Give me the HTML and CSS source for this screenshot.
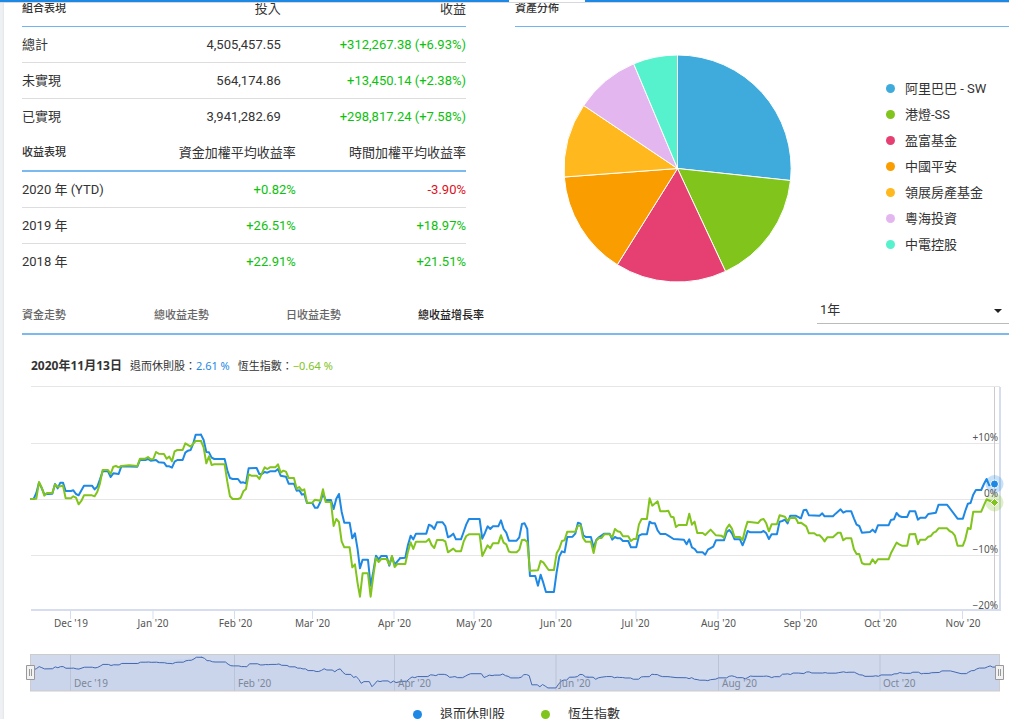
FILE: index.html
```html
<!DOCTYPE html>
<html lang="zh-Hant">
<head>
<meta charset="utf-8">
<meta name="viewport" content="width=device-width, initial-scale=1">
<title>組合表現</title>
<link rel="stylesheet" href="styles.css">
</head>
<body>
<div class="topbar"><span class="topbar-tab"></span></div>
<main class="card">
  <div class="overview">
    <section class="performance">
      <table class="figures">
        <thead><tr><th class="label" scope="col">組合表現</th><th class="first" scope="col">投入</th><th scope="col">收益</th></tr></thead>
        <tbody>
          <tr><th scope="row">總計</th><td class="first">4,505,457.55</td><td class="up">+312,267.38 (+6.93%)</td></tr>
          <tr><th scope="row">未實現</th><td class="first">564,174.86</td><td class="up">+13,450.14 (+2.38%)</td></tr>
          <tr><th scope="row">已實現</th><td class="first">3,941,282.69</td><td class="up">+298,817.24 (+7.58%)</td></tr>
        </tbody>
      </table>
      <table class="figures returns">
        <thead><tr><th class="label" scope="col">收益表現</th><th class="first" scope="col">資金加權平均收益率</th><th scope="col">時間加權平均收益率</th></tr></thead>
        <tbody>
          <tr><th scope="row">2020 年 (YTD)</th><td class="first up">+0.82%</td><td class="down">-3.90%</td></tr>
          <tr><th scope="row">2019 年</th><td class="first up">+26.51%</td><td class="up">+18.97%</td></tr>
          <tr><th scope="row">2018 年</th><td class="first up">+22.91%</td><td class="up">+21.51%</td></tr>
        </tbody>
      </table>
    </section>
    <section class="allocation">
      <h2 class="heading">資產分佈</h2>
      <div class="allocation-body">
        <svg class="pie" viewBox="563 54 229 229" role="img" aria-label="資產分佈">
          <g stroke="#fff" stroke-width="1">
            <path fill="#3eabdc" d="M677.5 168.5V55A113.5 113.5 0 0 1 790.5 180.5Z"/>
            <path fill="#80c41c" d="M677.5 168.5L790.5 180.5A113.5 113.5 0 0 1 725.5 271.4Z"/>
            <path fill="#e64072" d="M677.5 168.5L725.5 271.4A113.5 113.5 0 0 1 617.3 264.7Z"/>
            <path fill="#f99d00" d="M677.5 168.5L617.3 264.7A113.5 113.5 0 0 1 564.3 177Z"/>
            <path fill="#ffb81e" d="M677.5 168.5L564.3 177A113.5 113.5 0 0 1 583.7 105.5Z"/>
            <path fill="#e4b6f0" d="M677.5 168.5L583.7 105.5A113.5 113.5 0 0 1 633.7 63.8Z"/>
            <path fill="#56f1cd" d="M677.5 168.5L633.7 63.8A113.5 113.5 0 0 1 677.5 55Z"/>
          </g>
        </svg>
        <ul class="pie-legend">
          <li><i class="dot sky"></i>阿里巴巴 - SW</li>
          <li><i class="dot green"></i>港燈-SS</li>
          <li><i class="dot pink"></i>盈富基金</li>
          <li><i class="dot orange"></i>中國平安</li>
          <li><i class="dot amber"></i>領展房產基金</li>
          <li><i class="dot lilac"></i>粵海投資</li>
          <li><i class="dot mint"></i>中電控股</li>
        </ul>
      </div>
    </section>
  </div>

  <nav class="tabs">
    <button type="button">資金走勢</button>
    <button type="button">總收益走勢</button>
    <button type="button">日收益走勢</button>
    <button type="button" class="active">總收益增長率</button>
    <div class="period">
      <select aria-label="期間"><option>1年</option></select>
      <svg class="caret" viewBox="0 0 8 4" aria-hidden="true"><path d="M0 0H8L4 4Z" fill="#212121"/></svg>
    </div>
  </nav>

  <section class="trend">
    <p class="readout"><b>2020年11月13日</b><span>退而休則股：<em class="blue-text">2.61 %</em></span><span>恆生指數：<em class="green-text">−0.64 %</em></span></p>
    <svg class="chart" viewBox="4 380 1005 320" role="img" aria-label="總收益增長率">
      <defs>
        <g id="portfolio">
          <polyline transform="translate(60 0)" points="33,237 41,237 49,219 57,188 65,204 73,223 97,221 105,192 113,205 121,188 129,188 137,213 153,213 160,211 168,222 176,226 192,197 216,197 224,208 232,200 240,178 248,154 264,154 272,171 280,160 296,162 304,139 352,140 360,120 376,120 384,117 392,122 408,120 416,127 432,128 440,139 448,139 456,143 464,125 472,120 488,120 496,98 504,92 512,90 520,70 527,44 543,44"/>
          <polyline transform="translate(600 0)" points="3,44 11,60 19,96 27,97 35,113 43,117 74,117 82,151 90,174 98,177 114,177 122,188 130,187 138,190 146,145 170,144 178,162 186,162 194,156 202,158 210,154 226,154 234,147 242,167 258,170 266,191 282,191 290,212 298,211 306,224 313,222 321,249 337,249 345,263 353,263 361,246 369,221 377,240 393,240 401,267 409,236 417,222 425,275 433,308 449,308 457,355 465,340 473,388 480,445 488,419 504,419 512,497 520,455 528,407 536,418 544,408 560,408 568,437 576,410 584,434 600,415"/>
          <polyline transform="translate(1170 210)" points="30,205 46,203 54,165 62,137 70,148 78,131 109,131 117,104 125,108 133,117 141,97 158,97 166,108 174,142 182,138 190,131 198,148 213,148 221,126 229,103 237,87 269,87 277,146 285,129 293,109 301,117 309,109 325,109 333,91 341,117 349,128 357,152 380,152 388,142 396,102 404,100 412,117 420,258 436,258 444,287 452,254 460,278 468,306 492,306 500,247 508,200 516,184 524,187 532,141 548,140 556,131 564,98 572,101 580,136 588,141"/>
          <polyline transform="translate(1740 180)" points="18,171 33,171 41,203 49,180 57,172 73,161 89,161 97,179 105,171 113,175 121,175 129,183 145,183 153,202 169,202 177,167 185,163 201,163 209,125 217,130 225,130 233,151 241,162 257,162 265,167 281,177 312,179 320,193 328,178 336,202 344,207 352,217 368,217 376,224 384,209 400,200 408,181 432,181 440,157 448,150 456,160 464,178 480,178 488,196 496,176 503,153 511,157 543,157 551,153 559,160 567,177 575,163 591,163 599,125 607,123 615,119 623,130 631,107 647,107 660,114"/>
          <polyline transform="translate(2370 0)" points="30,294 33,295 41,271 49,269 57,286 89,287 97,280 104,289 129,289 137,281 152,268 160,278 168,274 184,274 192,295 200,314 208,318 216,338 240,336 248,329 256,337 264,316 296,316 303,300 312,298 320,279 328,288 336,291 352,291 359,274 376,274 384,299 391,293 407,293 415,282 438,278 446,254 471,254 479,264 503,296 519,296 526,273 534,251 542,249 550,224 558,210 574,210 582,192 590,177 598,196 613,192"/>
        </g>
        <g id="index">
          <polyline transform="translate(60 0)" points="33,237 49,236 57,186 65,202 73,227 81,219 97,219 105,194 113,200 129,197 137,235 153,235 160,229 168,233 176,253 184,243 192,226 216,226 224,229 232,215 240,190 248,150 264,150 272,162 280,140 288,138 296,142 304,138 328,136 352,138 360,116 376,116 384,111 392,118 400,117 408,96 416,101 432,102 440,116 448,110 456,124 464,94 472,90 488,90 496,70 512,80 527,63 543,63"/>
          <polyline transform="translate(600 0)" points="3,63 11,82 19,130 27,109 35,135 43,133 74,133 82,185 90,229 98,237 114,237 122,234 130,214 138,207 146,163 154,167 170,167 178,177 194,142 202,147 210,142 226,142 234,133 242,158 250,152 258,155 266,174 282,174 290,206 298,201 306,212 313,208 321,248 337,248 345,239 361,242 369,208 377,246 393,246 401,318 409,297 417,306 425,364 433,382 449,382 457,442 465,433 473,490 480,530 488,460 504,460 512,530 520,468 528,413 536,426 544,417 560,417 568,434 576,408"/>
          <polyline transform="translate(1170 210)" points="6,198 14,231 22,222 46,222 54,185 62,157 70,177 78,155 109,155 117,147 125,165 133,174 141,150 158,150 166,154 174,187 190,176 198,184 213,184 221,155 229,138 237,133 269,133 277,198 293,166 301,175 309,160 325,160 333,136 341,158 349,163 357,185 364,187 380,187 388,179 396,150 404,149 412,156 420,242 444,241 452,213 460,217 476,240 492,240 500,190 508,176 516,153 524,151 532,125 556,125 564,107 572,107"/>
          <polyline transform="translate(1740 180)" points="2,137 9,173 17,185 33,185 41,219 49,182 57,174 65,174 73,163 89,163 97,172 105,147 113,154 121,156 129,169 145,169 153,183 161,177 169,177 177,133 185,117 201,117 209,55 217,77 233,64 241,94 257,94 265,92 273,110 281,112 288,141 296,135 320,135 328,101 336,134 344,125 352,159 368,159 376,165 392,149 408,166 424,167 432,173 440,145 448,134 456,146 464,171 480,171 488,180 496,147 503,125 535,129 543,119 551,117 559,130 567,154 575,133 591,133 599,106 615,110 623,123 631,114 647,114 655,129"/>
          <polyline transform="translate(2370 0)" points="25,309 33,308 49,319 57,340 73,340 81,346 89,346 97,354 104,364 112,352 129,352 144,338 152,338 160,361 168,355 184,355 192,388 200,402 208,402 216,429 224,433 240,433 248,418 256,430 264,418 296,418 303,400 320,368 328,373 336,377 352,377 359,343 376,342 384,373 391,359 407,359 415,350 423,348 431,338 438,335 446,325 471,325 479,333 487,337 495,347 503,377 519,377 526,358 534,324 542,327 550,275 574,275 582,256 590,238 601,243 613,247"/>
        </g>
      </defs>

      <path class="grid" d="M31 386.500H1000M31 443.500H1000M31 499.500H1000M31 555.500H1000"/>
      <path class="crosshair" d="M994.500 387V610"/>
      <path class="axis" d="M31 610H1001M1000 387V610"/>
      <path class="axis-tick" d="M70.500 610v9M153 610v9M234.500 610v9M312.500 610v9M394 610v9M474 610v9M556 610v9M636 610v9M718 610v9M800.500 610v9M880 610v9M962.500 610v9"/>

      <circle cx="994.500" cy="484" r="9" fill="#1e88e5" fill-opacity=".25"/>
      <circle cx="994.500" cy="502.500" r="9" fill="#80c41c" fill-opacity=".25"/>
      <use href="#portfolio" class="series blue-line" transform="translate(0 420) scale(.3333)"/>
      <use href="#index" class="series green-line" transform="translate(0 420) scale(.3333)"/>
      <circle cx="994.500" cy="484" r="4" fill="#1e88e5" stroke="#fff" stroke-width="1"/>
      <path d="M994.500 498.500l4 4-4 4-4-4z" fill="#80c41c" stroke="#fff" stroke-width="1"/>

      <g class="axis-text end">
        <text x="998" y="441">+10%</text><text x="998" y="497">0%</text><text x="998" y="553">−10%</text><text x="998" y="609">−20%</text>
      </g>
      <g class="axis-text middle">
        <text x="71" y="627">Dec '19</text><text x="153" y="627">Jan '20</text><text x="235.500" y="627">Feb '20</text><text x="312.500" y="627">Mar '20</text><text x="394.500" y="627">Apr '20</text><text x="474" y="627">May '20</text><text x="556" y="627">Jun '20</text><text x="635.500" y="627">Jul '20</text><text x="718.500" y="627">Aug '20</text><text x="800.500" y="627">Sep '20</text><text x="880.500" y="627">Oct '20</text><text x="963" y="627">Nov '20</text>
      </g>

      <path d="M31 669L60 667 90 668 110 664 140 662 185 659 197 657 207 661 226 662 234 666 246 666 250 663 285 665 310 671 340 669 350 674 360 682 371 687 376 681 400 681 420 676 445 674 452 677 474 673 520 675 528 677 531 685 545 687 555 688 565 678 580 674 600 677 635 679 652 674 700 680 740 677 775 676 800 672 850 672 870 676 930 671 960 673 985 667 1000 667V691H31Z" fill="#335cad" fill-opacity=".05"/>
      <path class="nav-grid" d="M70.500 655v36M234.500 655v36M394.500 655v36M556 655v36M718.500 655v36M880 655v36"/>
      <use href="#portfolio" class="series nav-line" transform="translate(0 654.400) scale(.3345 .065)"/>
      <g class="axis-text muted">
        <text x="74" y="687">Dec '19</text><text x="238" y="687">Feb '20</text><text x="398" y="687">Apr '20</text><text x="559" y="687">Jun '20</text><text x="722" y="687">Aug '20</text><text x="883" y="687">Oct '20</text>
      </g>
      <rect x="30.500" y="654.500" width="969" height="36.500" fill="#6685c2" fill-opacity=".3"/>
      <path d="M30 654.500H1000M30 691H1000M30.500 655V691M999.500 655V691" stroke="#ccc" fill="none"/>
      <g fill="#f2f2f2" stroke="#999">
        <path d="M26.500 665.500h8v14h-8zM29.500 669v7M31.500 669v7"/>
        <path d="M995.500 665.500h8v14h-8zM998.500 669v7M1000.500 669v7"/>
      </g>
    </svg>
    <ul class="series-legend">
      <li><i class="dot blue"></i>退而休則股</li>
      <li><i class="dot green"></i>恆生指數</li>
    </ul>
  </section>
</main>
</body>
</html>
```

FILE: styles.css
```css
* { box-sizing: border-box; }

html { overflow: hidden; }

body {
  margin: 0;
  height: 100vh;
  overflow: hidden;
  background: #eef0f3;
  color: #333;
  font-family: Roboto, "Noto Sans CJK TC", sans-serif;
  font-size: 13px;
  line-height: 16px;
}

ul, p, h2 { margin: 0; padding: 0; }
ul { list-style: none; }

.topbar {
  position: absolute;
  inset: 0 0 auto;
  height: 3px;
  background: #1e88e5;
  border-bottom: 1px solid #d5d9dd;
}

.topbar-tab {
  display: block;
  width: 76px;
  height: 2px;
  margin-left: 509px;
  background: #fff;
}

.card {
  margin-left: 4px;
  background: #fff;
  min-height: 100vh;
  box-shadow: 0 0 2px #d5d8dc;
}

.overview {
  display: grid;
  grid-template-columns: 444fr 494fr;
  gap: 49px;
  padding-left: 18px;
}

.figures {
  width: 100%;
  table-layout: fixed;
  border-collapse: separate;
  border-spacing: 0;
}

.figures th, .figures td {
  height: 36px;
  padding: 0;
  text-align: right;
  font-weight: 400;
  white-space: nowrap;
  border-bottom: 1px solid #ddd;
}

.figures tr > :first-child { text-align: left; width: 30%; }
.figures .first { padding-right: 52px; width: 40%; }
.figures thead th { height: 27px; padding-bottom: 9px; border-bottom-color: #70b4f0; }
.figures thead .first { padding-right: 52px; }
.figures tbody tr:last-child > * { border-bottom: 0; }
.figures .label { font-size: 11px; font-weight: 500; }

.returns .first, .returns thead .first { padding-right: 37px; }
.returns thead th { height: 37px; padding-bottom: 0; border-bottom: 2px solid #7cb9ef; }

.up { color: #0cc20c; }
.down { color: #dd1122; }

.heading {
  height: 27px;
  padding-top: 1px;
  font-size: 11px;
  font-weight: 500;
  border-bottom: 1px solid #70b4f0;
}

.allocation-body {
  display: flex;
  gap: 94px;
  padding: 27px 0 0 48px;
  align-items: center;
}

.pie { flex: 0 1 229px; min-width: 0; }
.pie-legend { padding-bottom: 4px; white-space: nowrap; line-height: 26px; }
.pie-legend li { display: flex; align-items: center; gap: 10px; }

.dot {
  width: 9px;
  height: 9px;
  border-radius: 50%;
  flex: none;
}
.sky { background: #3eabdc; }
.green { background: #80c41c; }
.pink { background: #e64072; }
.orange { background: #f99d00; }
.amber { background: #ffb81e; }
.lilac { background: #e4b6f0; }
.mint { background: #56f1cd; }
.blue { background: #1e88e5; }

.tabs {
  display: flex;
  height: 38px;
  margin: 14px 0 0 18px;
  border-bottom: 2px solid #7cb9ef;
}

.tabs button {
  width: 132px;
  height: 36px;
  padding: 2px 0 0;
  border: 0;
  background: none;
  color: #666;
  font: 500 11px/16px Roboto, "Noto Sans CJK TC", sans-serif;
  text-align: left;
}
.tabs .active { color: #212121; }

.period {
  position: relative;
  width: 192px;
  height: 27px;
  margin-left: auto;
  border-bottom: 1px solid #bbb;
}

.period select {
  width: 100%;
  height: 26px;
  padding: 0 3px;
  border: 0;
  appearance: none;
  background: none;
  color: #333;
  font: inherit;
}

.caret {
  position: absolute;
  right: 7px;
  top: 12px;
  width: 8px;
  height: 4px;
  pointer-events: none;
}

.readout {
  display: flex;
  gap: 8px;
  padding: 23px 0 6px 27px;
  font-family: "Noto Sans", "Noto Sans CJK TC", sans-serif;
  font-size: 11px;
}
.readout b { font-size: 12px; }
.readout em { font-style: normal; }
.blue-text { color: #1e88e5; }
.green-text { color: #80c41c; }

.chart { display: block; width: 100%; height: auto; }
.grid { stroke: #e6e6e6; }
.crosshair { stroke: #ccc; }
.axis { stroke: #d5ddee; stroke-width: 2; }
.axis-tick { stroke: #d5ddee; }
.nav-grid { stroke: #e0e0e0; }

.series {
  fill: none;
  stroke-linejoin: round;
  stroke-linecap: round;
  stroke-width: 2;
}
#portfolio polyline, #index polyline { vector-effect: non-scaling-stroke; }
.blue-line { stroke: #1e88e5; }
.green-line { stroke: #80c41c; }
.nav-line { stroke: #335cad; stroke-width: 1; }

.axis-text { font-family: "Noto Sans", sans-serif; font-size: 10px; fill: #555; }
.end { text-anchor: end; }
.middle { text-anchor: middle; }
.muted { fill: #888; }

.series-legend {
  display: flex;
  justify-content: center;
  gap: 36px;
  padding: 6px 0 0 20px;
}
.series-legend li { display: flex; align-items: center; gap: 18px; }
```
